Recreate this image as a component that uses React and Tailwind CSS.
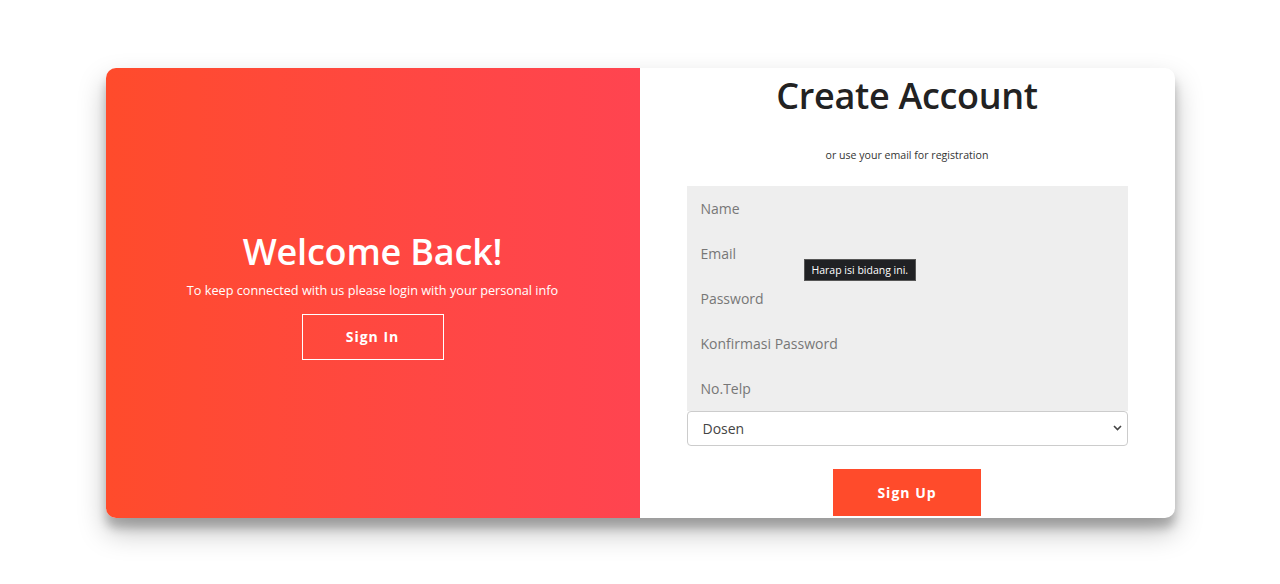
import { useState } from 'react'

const FONT = { fontFamily: '"Open Sans", "Noto Sans", "Liberation Sans", sans-serif' }

const FIELDS = ['Name', 'Email', 'Password', 'Konfirmasi Password', 'No.Telp']

export default function App() {
  const [role, setRole] = useState('Dosen')

  return (
    <div className="w-full h-[584px] bg-white flex justify-center pt-[68px]" style={FONT}>
      <div className="relative w-[1069px] h-[450px] rounded-[10px] overflow-hidden flex bg-white shadow-[0_14px_28px_rgba(0,0,0,0.25),0_10px_10px_rgba(0,0,0,0.22)]">
        {/* ── Overlay panel ── */}
        <div className="w-[534px] h-full bg-gradient-to-r from-[#FF4B2B] to-[#FF4450] flex flex-col items-center justify-center pt-[3px] text-white text-center">
          <h1 className="text-[36px] leading-[44px] font-semibold tracking-[-0.2px]">Welcome Back!</h1>
          <p className="text-[12.7px] leading-[18px] mt-[7px]">To keep connected with us please login with your personal info</p>
          <button className="mt-[15px] w-[142px] h-[46px] border border-white text-[14px] font-bold tracking-[1px]">Sign In</button>
        </div>

        {/* ── Sign up form ── */}
        <div className="flex-1 h-full flex flex-col items-center pt-[6px] px-[47px]">
          <h1 className="text-[36px] leading-[44px] font-semibold text-[#222] tracking-[-0.3px]">Create Account</h1>
          <span className="mt-[29px] text-[10.6px] leading-[16px] text-[#333]">or use your email for registration</span>
          <div className="mt-[23px] w-full bg-[#eeeeee]">
            {FIELDS.map((f) => (
              <input key={f} placeholder={f}
                className="block w-full h-[45px] bg-transparent px-[14px] text-[14px] text-[#333] placeholder:text-[#777] outline-none" />
            ))}
          </div>
          <div className="relative w-full">
            <select value={role} onChange={(e) => setRole(e.target.value)}
              className="appearance-none w-full h-[35px] bg-white border border-[#ccc] rounded-[4px] pl-[15px] text-[14px] text-[#444] outline-none">
              <option>Dosen</option>
              <option>Mahasiswa</option>
            </select>
            <svg className="absolute right-[6px] top-[14px] pointer-events-none" width="9" height="6" viewBox="0 0 9 6">
              <path d="M1 1l3.5 3.5L8 1" fill="none" stroke="#444" strokeWidth="1.6" />
            </svg>
          </div>
          <button className="mt-[23px] w-[148px] h-[47px] bg-[#FF4B2B] text-white text-[14px] font-bold tracking-[1px]">Sign Up</button>
        </div>

        {/* validation tooltip */}
        <div className="absolute left-[698px] top-[191px] h-[22px] px-[7px] bg-[#202124] border border-[#555] text-white text-[10.5px] leading-[20px]">
          Harap isi bidang ini.
        </div>
      </div>
    </div>
  )
}
